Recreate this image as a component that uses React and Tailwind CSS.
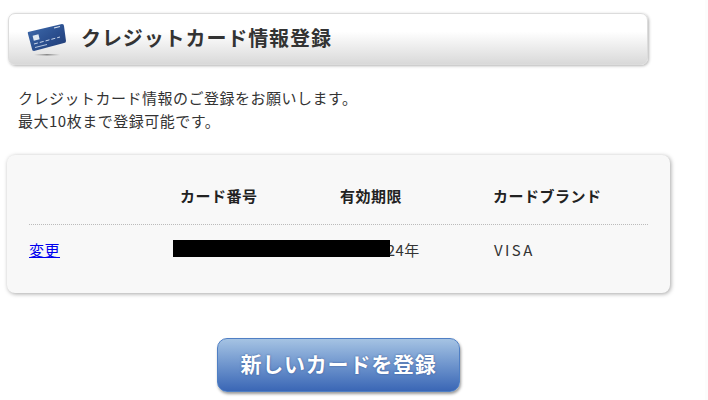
const font = { fontFamily: '"Noto Sans CJK JP", "Liberation Sans", sans-serif' }

function CardIcon() {
  return (
    <svg width="40" height="36" viewBox="0 0 40 36" className="shrink-0">
      <defs>
        <linearGradient id="card" x1="0" y1="0" x2="1" y2="1">
          <stop offset="0" stopColor="#3f6cae" />
          <stop offset="0.55" stopColor="#2b4f8f" />
          <stop offset="1" stopColor="#1f3a72" />
        </linearGradient>
        <linearGradient id="floor" x1="0" y1="0" x2="1" y2="0">
          <stop offset="0" stopColor="#999" stopOpacity="0" />
          <stop offset="0.5" stopColor="#888" />
          <stop offset="1" stopColor="#999" stopOpacity="0" />
        </linearGradient>
      </defs>
      <path d="M1 11 L35 3 Q37 3 37 5 L39 20 Q39 22 37 22 L7 30 Q5 30 5 28 L1 13 Q0.5 11.5 1 11 Z" fill="url(#card)" />
      <rect x="6" y="14" width="6" height="5" fill="#dfe8f2" transform="rotate(-14 9 16)" />
      <path d="M7 23 L33 16" stroke="#c9d6ea" strokeWidth="1" strokeDasharray="4 2" />
      <path d="M8 26.5 L20 23.5" stroke="#b6c7e0" strokeWidth="1" />
      <path d="M27 7 L33 5.5" stroke="#dfe8f2" strokeWidth="1.2" />
      <rect x="7" y="33" width="26" height="1.5" fill="url(#floor)" />
    </svg>
  )
}

export default function App() {
  return (
    <div className="w-[708px] h-[400px] overflow-hidden bg-white border-r-[3px] border-[#fcfcfc] pt-[13px] pl-[7px] text-[#333]" style={font}>
      {/* Title bar */}
      <div className="ml-px w-[640px] h-[52px] flex items-center gap-[14px] pl-[18px] rounded-[7px] border border-[#dcdcdc] bg-gradient-to-b from-white from-35% to-[#d9d9d9] shadow-[1px_1px_3px_rgba(0,0,0,0.3)]">
        <CardIcon />
        <h1 className="pb-[3px] text-[20px] font-bold tracking-[0.9px] text-[#333] whitespace-nowrap">クレジットカード情報登録</h1>
      </div>

      <div className="ml-[11px] mt-[21px] text-[15px] leading-[23px] tracking-[0.5px] text-[#333] whitespace-nowrap">
        <p>クレジットカード情報のご登録をお願いします。</p>
        <p>最大10枚まで登録可能です。</p>
      </div>

      {/* Card list */}
      <div className="mt-[23px] w-[663px] h-[138px] rounded-[8px] bg-[#f8f8f8] px-[22px] shadow-[1px_1px_4px_rgba(0,0,0,0.35)]">
        <div className="h-[70px] flex items-center border-b border-dotted border-[#bbb] pt-[14px] text-[15px] font-bold tracking-[0.5px] text-[#222] whitespace-nowrap">
          <div className="w-[151px]" />
          <div className="w-[160px]">カード番号</div>
          <div className="w-[153px]">有効期限</div>
          <div>カードブランド</div>
        </div>
        <div className="relative h-[50px] flex items-center text-[15px] tracking-[0.5px] text-[#333] whitespace-nowrap">
          <a href="#" className="w-[311px] text-[#0000ee] underline">変更</a>
          <div className="w-[153px] pl-[29px]">2024年</div>
          <div className="ml-px tracking-[2.4px]">VISA</div>
          <div className="absolute left-[144px] top-[15px] w-[217px] h-[17px] bg-black" />
        </div>
      </div>

      <div className="mt-[45px] ml-[210px] w-[243px] h-[54px] flex items-center justify-center rounded-[10px] border border-[#4f7fc4] bg-gradient-to-b from-[#a5c3e3] to-[#3a66b5] shadow-[1px_2px_3px_rgba(0,0,0,0.4)]">
        <span className="pb-[3px] text-[21px] font-bold tracking-[0.8px] text-white [text-shadow:0_0_2px_rgba(40,70,130,0.8)] whitespace-nowrap">新しいカードを登録</span>
      </div>
    </div>
  )
}
